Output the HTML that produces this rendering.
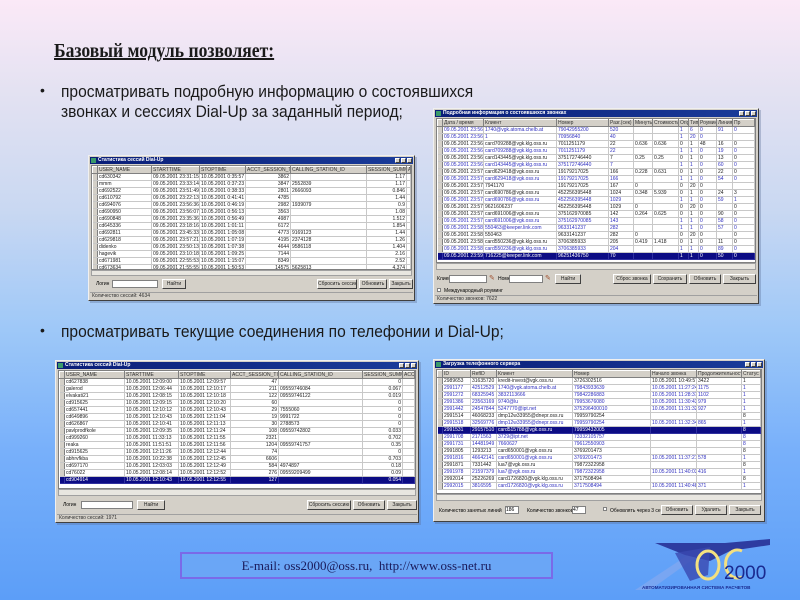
<!DOCTYPE html>
<html><head><meta charset="utf-8"><style>
*{margin:0;padding:0;box-sizing:border-box}
body{width:800px;height:600px;overflow:hidden;position:relative;background:linear-gradient(180deg,#fbe9f7 0%,#e4e2f2 15%,#c9d8f2 35%,#9ec8f8 55%,#78b0fa 75%,#5c9ef8 100%);font-family:"Liberation Sans",sans-serif}
.t{position:absolute;color:#1a1a1a}
.bl{font-size:17px;line-height:20px;white-space:nowrap;transform:scaleX(.915);transform-origin:0 0}
.win{position:absolute;background:#d4d0c8;border:1px solid #f0f0f0;border-right-color:#404040;border-bottom-color:#404040;box-shadow:2px 2px 0 rgba(90,110,150,.35);display:flex;flex-direction:column;padding:1px;font:5px "Liberation Sans",sans-serif;overflow:hidden}
.tb{height:7px;flex:none;background:linear-gradient(90deg,#0a1e78,#1a3c9a);color:#fff;font-weight:bold;line-height:7px;padding-left:8px;position:relative;white-space:nowrap}
.tb:before{content:"";position:absolute;left:1px;top:1px;width:5px;height:5px;background:#3a9a6a}
.tb i{position:absolute;top:1px;width:5px;height:5px;background:#d4d0c8;border:1px solid #fff;border-right-color:#404040;border-bottom-color:#404040}
.grid{flex:1;background:#fff;border:1px solid #808080;overflow:hidden;margin:1px 1px 0}
table{border-collapse:collapse;width:100%;table-layout:fixed}
td,th{border-right:1px solid #c8c8c8;border-bottom:1px solid #c8c8c8;height:7px;line-height:6px;padding:0 1px;white-space:nowrap;overflow:hidden;color:#222;font-weight:normal;text-align:left;font-size:5px}
th{background:#d4d0c8;border:1px solid #fff;border-right-color:#808080;border-bottom-color:#808080;color:#333}
td.i{background:#d4d0c8;border-right:1px solid #808080;width:5px}
tr.s td{background:#0c0c84;color:#fff;border-color:#3030a0}
tr.b td{color:#3030c0}
.r{text-align:right}
.hs{height:6px;flex:none;background:#e8e6e0;margin:0 1px;border:1px solid #a0a0a0}
.pn{flex:none;position:relative;white-space:nowrap}
.bt{position:absolute;height:10px;background:#d4d0c8;border:1px solid #fff;border-right-color:#404040;border-bottom-color:#404040;font-size:5px;line-height:8px;text-align:center;color:#222;white-space:nowrap;overflow:hidden}
.in{position:absolute;height:8px;background:#fff;border:1px solid #808080}
.st{flex:none;height:7px;border-top:1px solid #a0a0a0;line-height:6px;padding-left:2px;color:#333}
</style></head><body>

<div class="t" style="left:54px;top:40px;font:bold 20px 'Liberation Serif',serif;text-decoration:underline;transform:scaleX(.88);transform-origin:0 0;white-space:nowrap">Базовый модуль позволяет:</div>

<div class="t" style="left:40px;top:82px;font-size:14px">•</div>
<div class="t bl" style="left:61px;top:82px">просматривать подробную информацию о состоявшихся<br>звонках и сессиях Dial-Up за заданный период;</div>

<div class="t" style="left:40px;top:322px;font-size:14px">•</div>
<div class="t bl" style="left:61px;top:322px">просматривать текущие соединения по телефонии и Dial-Up;</div>

<!-- top-left window -->
<div class="win" style="left:88px;top:155px;width:327px;height:146px">
<div class="tb">Статистика сессий Dial-Up<i style="right:13px"></i><i style="right:7px"></i><i style="right:1px"></i></div>
<div class="grid"><table>
<tr><th style="width:5px"></th><th style="width:54px">USER_NAME</th><th style="width:48px">STARTTIME</th><th style="width:46px">STOPTIME</th><th style="width:45px">ACCT_SESSION_TIME</th><th style="width:76px">CALLING_STATION_ID</th><th style="width:40px">SESSION_SUMM</th><th>ACC</th></tr>
<tr><td class="i"></td><td>cd630342</td><td>09.05.2001 23:31:15</td><td>10.05.2001 0:35:57</td><td class="r">3862</td><td></td><td class="r">1.17</td><td></td></tr>
<tr><td class="i"></td><td>mmm</td><td>09.05.2001 23:33:14</td><td>10.05.2001 0:37:23</td><td class="r">3847</td><td>2552839</td><td class="r">1.17</td><td></td></tr>
<tr><td class="i"></td><td>cd692522</td><td>09.05.2001 23:51:49</td><td>10.05.2001 0:38:33</td><td class="r">2801</td><td>2666093</td><td class="r">0.846</td><td></td></tr>
<tr><td class="i"></td><td>cd610792</td><td>09.05.2001 23:22:13</td><td>10.05.2001 0:41:41</td><td class="r">4785</td><td></td><td class="r">1.44</td><td></td></tr>
<tr><td class="i"></td><td>cd694076</td><td>09.05.2001 23:56:36</td><td>10.05.2001 0:46:19</td><td class="r">2982</td><td>1939079</td><td class="r">0.9</td><td></td></tr>
<tr><td class="i"></td><td>cd690950</td><td>09.05.2001 23:56:07</td><td>10.05.2001 0:56:13</td><td class="r">3563</td><td></td><td class="r">1.08</td><td></td></tr>
<tr><td class="i"></td><td>cd690848</td><td>09.05.2001 23:35:36</td><td>10.05.2001 0:56:49</td><td class="r">4987</td><td></td><td class="r">1.512</td><td></td></tr>
<tr><td class="i"></td><td>cd645336</td><td>09.05.2001 23:18:16</td><td>10.05.2001 1:01:11</td><td class="r">6172</td><td></td><td class="r">1.854</td><td></td></tr>
<tr><td class="i"></td><td>cd692811</td><td>09.05.2001 23:45:33</td><td>10.05.2001 1:05:08</td><td class="r">4773</td><td>9169123</td><td class="r">1.44</td><td></td></tr>
<tr><td class="i"></td><td>cd629818</td><td>09.05.2001 23:57:21</td><td>10.05.2001 1:07:19</td><td class="r">4195</td><td>2374128</td><td class="r">1.26</td><td></td></tr>
<tr><td class="i"></td><td>didenko</td><td>09.05.2001 23:50:13</td><td>10.05.2001 1:07:38</td><td class="r">4644</td><td>9586118</td><td class="r">1.404</td><td></td></tr>
<tr><td class="i"></td><td>hagevik</td><td>09.05.2001 23:10:18</td><td>10.05.2001 1:09:25</td><td class="r">7144</td><td></td><td class="r">2.16</td><td></td></tr>
<tr><td class="i"></td><td>cd671981</td><td>09.05.2001 22:55:53</td><td>10.05.2001 1:15:07</td><td class="r">8349</td><td></td><td class="r">2.52</td><td></td></tr>
<tr><td class="i"></td><td>cd673634</td><td>09.05.2001 21:55:55</td><td>10.05.2001 1:50:53</td><td class="r">14575</td><td>5625813</td><td class="r">4.374</td><td></td></tr>
<tr class="s"><td class="i"></td><td>mehukov</td><td>09.05.2001 22:10:43</td><td>10.05.2001 2:50:40</td><td class="r">20535</td><td></td><td class="r">0</td><td></td></tr>
</table></div>
<div class="hs"></div>
<div class="pn" style="height:16px"><span style="position:absolute;left:6px;top:5px">Логин</span><div class="in" style="left:22px;top:4px;width:46px"></div><div class="bt" style="left:72px;top:3px;width:24px">Найти</div><div class="bt" style="left:227px;top:3px;width:40px">Сбросить сессию</div><div class="bt" style="left:269px;top:3px;width:28px">Обновить</div><div class="bt" style="left:299px;top:3px;width:24px">Закрыть</div></div>
<div class="st">Количество сессий: 4634</div>
</div>

<!-- top-right window -->
<div class="win" style="left:433px;top:108px;width:326px;height:196px">
<div class="tb">Подробная информация о состоявшихся звонках<i style="right:13px"></i><i style="right:7px"></i><i style="right:1px"></i></div>
<div class="grid"><table>
<tr><th style="width:5px"></th><th style="width:41px">Дата / время</th><th style="width:73px">Клиент</th><th style="width:52px">Номер</th><th style="width:25px">Разг.(сек)</th><th style="width:19px">Минуты</th><th style="width:26px">Стоимость</th><th style="width:10px">Origin</th><th style="width:10px">Тип</th><th style="width:18px">Роуминг</th><th style="width:16px">Линия</th><th>Пр</th></tr>
<tr class="b"><td class="i"></td><td>09.05.2001 23:56:18</td><td>1740@vgk.atoma.chelb.at</td><td>79042955200</td><td>520</td><td></td><td></td><td>1</td><td>6</td><td>0</td><td>91</td><td>0</td></tr>
<tr class="b"><td class="i"></td><td>09.05.2001 23:56:23</td><td>1</td><td>70956840</td><td>40</td><td></td><td></td><td>1</td><td>20</td><td>0</td><td></td><td></td></tr>
<tr><td class="i"></td><td>09.05.2001 23:56:24</td><td>card709288@vgk.klg.oss.ru</td><td>7011251179</td><td>22</td><td>0.636</td><td>0.636</td><td>0</td><td>1</td><td>48</td><td>16</td><td>0</td></tr>
<tr class="b"><td class="i"></td><td>09.05.2001 23:56:24</td><td>card709288@vgk.klg.oss.ru</td><td>7011251179</td><td>22</td><td></td><td></td><td>1</td><td>1</td><td>0</td><td>19</td><td>0</td></tr>
<tr><td class="i"></td><td>09.05.2001 23:56:48</td><td>card143445@vgk.klg.oss.ru</td><td>375172746440</td><td>7</td><td>0.25</td><td>0.25</td><td>0</td><td>1</td><td>0</td><td>13</td><td>0</td></tr>
<tr class="b"><td class="i"></td><td>09.05.2001 23:56:48</td><td>card143445@vgk.klg.oss.ru</td><td>375172746440</td><td>7</td><td></td><td></td><td>1</td><td>1</td><td>0</td><td>60</td><td>0</td></tr>
<tr><td class="i"></td><td>09.05.2001 23:57:02</td><td>card629418@vgk.oss.ru</td><td>19179217025</td><td>166</td><td>0.228</td><td>0.631</td><td>0</td><td>1</td><td>0</td><td>22</td><td>0</td></tr>
<tr class="b"><td class="i"></td><td>09.05.2001 23:57:02</td><td>card629418@vgk.oss.ru</td><td>19179217025</td><td>166</td><td></td><td></td><td>1</td><td>1</td><td>0</td><td>54</td><td>0</td></tr>
<tr><td class="i"></td><td>09.05.2001 23:57:02</td><td>7941170</td><td>19179217025</td><td>167</td><td>0</td><td></td><td>0</td><td>20</td><td>0</td><td></td><td></td></tr>
<tr><td class="i"></td><td>09.05.2001 23:57:19</td><td>card690786@vgk.oss.ru</td><td>452256395448</td><td>1024</td><td>0.348</td><td>5.939</td><td>0</td><td>1</td><td>0</td><td>24</td><td>3</td></tr>
<tr class="b"><td class="i"></td><td>09.05.2001 23:57:19</td><td>card690786@vgk.oss.ru</td><td>452256395448</td><td>1029</td><td></td><td></td><td>1</td><td>1</td><td>0</td><td>59</td><td>1</td></tr>
<tr><td class="i"></td><td>09.05.2001 23:57:19</td><td>9621606237</td><td>452256395448</td><td>1029</td><td>0</td><td></td><td>0</td><td>20</td><td>0</td><td></td><td>0</td></tr>
<tr><td class="i"></td><td>09.05.2001 23:57:43</td><td>card691006@vgk.oss.ru</td><td>375162970085</td><td>142</td><td>0.264</td><td>0.625</td><td>0</td><td>1</td><td>0</td><td>90</td><td>0</td></tr>
<tr class="b"><td class="i"></td><td>09.05.2001 23:57:43</td><td>card691006@vgk.oss.ru</td><td>375162970085</td><td>143</td><td></td><td></td><td>1</td><td>1</td><td>0</td><td>58</td><td>0</td></tr>
<tr class="b"><td class="i"></td><td>09.05.2001 23:58:44</td><td>550463@keeper.link.com</td><td>9633141237</td><td>282</td><td></td><td></td><td>1</td><td>1</td><td>0</td><td>57</td><td>0</td></tr>
<tr><td class="i"></td><td>09.05.2001 23:58:44</td><td>550463</td><td>9633141237</td><td>282</td><td>0</td><td></td><td>0</td><td>20</td><td>0</td><td></td><td>0</td></tr>
<tr><td class="i"></td><td>09.05.2001 23:58:52</td><td>card550236@vgk.klg.oss.ru</td><td>3706385933</td><td>205</td><td>0.419</td><td>1.418</td><td>0</td><td>1</td><td>0</td><td>11</td><td>0</td></tr>
<tr class="b"><td class="i"></td><td>09.05.2001 23:58:52</td><td>card550236@vgk.klg.oss.ru</td><td>3706385933</td><td>204</td><td></td><td></td><td>1</td><td>1</td><td>0</td><td>89</td><td>0</td></tr>
<tr class="s"><td class="i"></td><td>09.05.2001 23:59:26</td><td>716225@keeper.link.com</td><td>96251436750</td><td>70</td><td></td><td></td><td>1</td><td>1</td><td>0</td><td>50</td><td>0</td></tr>
</table></div>
<div class="hs" style="height:7px"></div>
<div class="pn" style="height:18px"><span style="position:absolute;left:2px;top:6px">Клиент</span><div class="in" style="left:14px;top:5px;width:38px"></div><span style="position:absolute;left:54px;top:4px;color:#a05030;font-size:7px">✎</span><span style="position:absolute;left:63px;top:6px">Номер</span><div class="in" style="left:74px;top:5px;width:34px"></div><span style="position:absolute;left:110px;top:4px;color:#a05030;font-size:7px">✎</span><div class="bt" style="left:120px;top:4px;width:26px">Найти</div><div class="bt" style="left:178px;top:4px;width:38px">Сброс звонка</div><div class="bt" style="left:218px;top:4px;width:34px">Сохранить</div><div class="bt" style="left:254px;top:4px;width:32px">Обновить</div><div class="bt" style="left:288px;top:4px;width:33px">Закрыть</div></div>
<div class="pn" style="height:7px"><span style="position:absolute;left:2px;top:0;width:4px;height:4px;background:#fff;border:1px solid #808080"></span><span style="position:absolute;left:9px;top:0">Международный роуминг</span></div>
<div class="st">Количество звонков: 7622</div>
</div>

<!-- bottom-left window -->
<div class="win" style="left:55px;top:360px;width:364px;height:163px">
<div class="tb">Статистика сессий Dial-Up<i style="right:13px"></i><i style="right:7px"></i><i style="right:1px"></i></div>
<div class="grid"><table>
<tr><th style="width:5px"></th><th style="width:60px">USER_NAME</th><th style="width:54px">STARTTIME</th><th style="width:52px">STOPTIME</th><th style="width:48px">ACCT_SESSION_TIME</th><th style="width:84px">CALLING_STATION_ID</th><th style="width:40px">SESSION_SUMM</th><th>ACC</th></tr>
<tr><td class="i"></td><td>cd627838</td><td>10.05.2001 12:09:00</td><td>10.05.2001 12:09:57</td><td class="r">47</td><td></td><td class="r">0</td><td></td></tr>
<tr><td class="i"></td><td>galerod</td><td>10.05.2001 12:06:44</td><td>10.05.2001 12:10:17</td><td class="r">211</td><td>09559746084</td><td class="r">0.067</td><td></td></tr>
<tr><td class="i"></td><td>elvakati21</td><td>10.05.2001 12:08:15</td><td>10.05.2001 12:10:18</td><td class="r">122</td><td>09559746122</td><td class="r">0.019</td><td></td></tr>
<tr><td class="i"></td><td>cd915625</td><td>10.05.2001 12:09:15</td><td>10.05.2001 12:10:20</td><td class="r">60</td><td></td><td class="r">0</td><td></td></tr>
<tr><td class="i"></td><td>cd657441</td><td>10.05.2001 12:10:12</td><td>10.05.2001 12:10:43</td><td class="r">29</td><td>7555060</td><td class="r">0</td><td></td></tr>
<tr><td class="i"></td><td>cd649896</td><td>10.05.2001 12:10:43</td><td>10.05.2001 12:11:04</td><td class="r">19</td><td>9991722</td><td class="r">0</td><td></td></tr>
<tr><td class="i"></td><td>cd626867</td><td>10.05.2001 12:10:41</td><td>10.05.2001 12:11:13</td><td class="r">30</td><td>2788573</td><td class="r">0</td><td></td></tr>
<tr><td class="i"></td><td>pavlprodfkole</td><td>10.05.2001 12:09:35</td><td>10.05.2001 12:11:24</td><td class="r">108</td><td>09559742802</td><td class="r">0.033</td><td></td></tr>
<tr><td class="i"></td><td>cd999260</td><td>10.05.2001 11:33:13</td><td>10.05.2001 12:11:55</td><td class="r">2321</td><td></td><td class="r">0.702</td><td></td></tr>
<tr><td class="i"></td><td>reaka</td><td>10.05.2001 11:51:51</td><td>10.05.2001 12:11:56</td><td class="r">1204</td><td>09559741757</td><td class="r">0.35</td><td></td></tr>
<tr><td class="i"></td><td>cd915625</td><td>10.05.2001 12:11:26</td><td>10.05.2001 12:12:44</td><td class="r">74</td><td></td><td class="r">0</td><td></td></tr>
<tr><td class="i"></td><td>abhrvfkba</td><td>10.05.2001 10:22:38</td><td>10.05.2001 12:12:45</td><td class="r">6606</td><td></td><td class="r">0.703</td><td></td></tr>
<tr><td class="i"></td><td>cd697170</td><td>10.05.2001 12:03:03</td><td>10.05.2001 12:12:49</td><td class="r">584</td><td>4974897</td><td class="r">0.18</td><td></td></tr>
<tr><td class="i"></td><td>cd76022</td><td>10.05.2001 12:08:14</td><td>10.05.2001 12:12:52</td><td class="r">276</td><td>09559209499</td><td class="r">0.09</td><td></td></tr>
<tr class="s"><td class="i"></td><td>cd904914</td><td>10.05.2001 12:10:43</td><td>10.05.2001 12:12:55</td><td class="r">127</td><td></td><td class="r">0.054</td><td></td></tr>
</table></div>
<div class="hs" style="height:7px"></div>
<div class="pn" style="height:18px"><span style="position:absolute;left:6px;top:6px">Логин</span><div class="in" style="left:24px;top:5px;width:52px"></div><div class="bt" style="left:80px;top:4px;width:28px">Найти</div><div class="bt" style="left:250px;top:4px;width:44px">Сбросить сессию</div><div class="bt" style="left:296px;top:4px;width:32px">Обновить</div><div class="bt" style="left:330px;top:4px;width:30px">Закрыть</div></div>
<div class="st">Количество сессий: 1971</div>
</div>

<!-- bottom-right window -->
<div class="win" style="left:433px;top:359px;width:332px;height:163px">
<div class="tb">Загрузка телефонного сервера<i style="right:13px"></i><i style="right:7px"></i><i style="right:1px"></i></div>
<div class="grid"><table>
<tr><th style="width:5px"></th><th style="width:28px">ID</th><th style="width:26px">RefID</th><th style="width:76px">Клиент</th><th style="width:78px">Номер</th><th style="width:46px">Начало звонка</th><th style="width:45px">Продолжительность</th><th>Статус</th></tr>
<tr><td class="i"></td><td>2989653</td><td>31635720</td><td>kredit-invest@vgk.oss.ru</td><td>3726302516</td><td>10.05.2001 10:49:57</td><td>3422</td><td>1</td></tr>
<tr class="b"><td class="i"></td><td>2991177</td><td>42512529</td><td>1740@vgk.atoma.chelb.at</td><td>79843933639</td><td>10.05.2001 11:27:24</td><td>1175</td><td>1</td></tr>
<tr class="b"><td class="i"></td><td>2991272</td><td>68325945</td><td>3832113666</td><td>79842286883</td><td>10.05.2001 11:28:37</td><td>1102</td><td>1</td></tr>
<tr class="b"><td class="i"></td><td>2991386</td><td>23563169</td><td>9740@lu</td><td>79953676080</td><td>10.05.2001 11:30:43</td><td>979</td><td>1</td></tr>
<tr class="b"><td class="i"></td><td>2991442</td><td>24547844</td><td>5247770@ipt.net</td><td>375296400010</td><td>10.05.2001 11:31:32</td><td>927</td><td>1</td></tr>
<tr><td class="i"></td><td>2991514</td><td>46068233</td><td>dmp12w33955@dnepr.oss.ru</td><td>79959790254</td><td></td><td></td><td>8</td></tr>
<tr class="b"><td class="i"></td><td>2991518</td><td>32569776</td><td>dmp12w33955@dnepr.oss.ru</td><td>79959790254</td><td>10.05.2001 11:32:34</td><td>865</td><td>1</td></tr>
<tr class="s"><td class="i"></td><td>2991531</td><td>29157510</td><td>card515788@vgk.oss.ru</td><td>79959432005</td><td></td><td></td><td>8</td></tr>
<tr class="b"><td class="i"></td><td>2991708</td><td>2171563</td><td>3729@ipt.net</td><td>73332105757</td><td></td><td></td><td>8</td></tr>
<tr class="b"><td class="i"></td><td>2991731</td><td>14481949</td><td>7660627</td><td>79612550903</td><td></td><td></td><td>8</td></tr>
<tr><td class="i"></td><td>2991805</td><td>1293213</td><td>card650001@vgk.oss.ru</td><td>3769201473</td><td></td><td></td><td>8</td></tr>
<tr class="b"><td class="i"></td><td>2991816</td><td>46642141</td><td>card650001@vgk.oss.ru</td><td>3769201473</td><td>10.05.2001 11:37:21</td><td>578</td><td>1</td></tr>
<tr><td class="i"></td><td>2991871</td><td>7331442</td><td>lua7@vgk.oss.ru</td><td>79872322958</td><td></td><td></td><td>8</td></tr>
<tr class="b"><td class="i"></td><td>2991978</td><td>21597379</td><td>lua7@vgk.oss.ru</td><td>79872322958</td><td>10.05.2001 11:40:03</td><td>416</td><td>1</td></tr>
<tr><td class="i"></td><td>2992014</td><td>25226269</td><td>card1726820@vgk.klg.oss.ru</td><td>3717508494</td><td></td><td></td><td>8</td></tr>
<tr class="b"><td class="i"></td><td>2992015</td><td>3816595</td><td>card1726820@vgk.klg.oss.ru</td><td>3717508494</td><td>10.05.2001 11:40:48</td><td>371</td><td>1</td></tr>
</table></div>
<div class="hs" style="height:7px"></div>
<div class="pn" style="height:19px"><span style="position:absolute;left:4px;top:7px">Количество занятых линий</span><div class="in" style="left:70px;top:5px;width:14px;font-size:5px;line-height:6px">186</div><span style="position:absolute;left:92px;top:7px">Количество звонков</span><div class="in" style="left:137px;top:5px;width:14px;font-size:5px;line-height:6px">47</div><span style="position:absolute;left:168px;top:6px;width:4px;height:4px;background:#fff;border:1px solid #808080"></span><span style="position:absolute;left:175px;top:7px">Обновлять через 3 сек.</span><div class="bt" style="left:226px;top:4px;width:32px">Обновить</div><div class="bt" style="left:260px;top:4px;width:32px">Удалить</div><div class="bt" style="left:294px;top:4px;width:32px">Закрыть</div></div>
</div>

<!-- footer -->
<div style="position:absolute;left:180px;top:552px;width:373px;height:27px;border:2px solid #7a6ae8;background:#6aa6f6;color:#1a1a5a;font:13px 'Liberation Serif',serif;text-align:center;line-height:23px">E-mail: oss2000@oss.ru,&nbsp; http://www.oss-net.ru</div>

<!-- logo -->
<svg style="position:absolute;left:630px;top:535px" width="170" height="65" viewBox="0 0 170 65">
<path d="M5 55 L70 12 L80 12 L20 55 Z" fill="#7fa8f0" opacity=".8"/>
<path d="M25 8 L95 8 L140 4 L140 10 L100 16 L80 26 L55 20 Z" fill="#2e3ca0"/>
<path d="M45 18 L80 12 L78 40 L60 46 Z" fill="#3a48b0" opacity=".8"/>
<ellipse cx="78" cy="30" rx="11" ry="14" fill="none" stroke="#f4e080" stroke-width="3"/>
<path d="M112 16 A12 14 0 1 0 112 42" fill="none" stroke="#f4e080" stroke-width="3"/>
<text x="94" y="44" font-family="Liberation Sans,sans-serif" font-size="19" fill="#1a2a90">2000</text>
<text x="12" y="54" font-family="Liberation Sans,sans-serif" font-size="4.6" font-weight="bold" fill="#1a2a90">АВТОМАТИЗИРОВАННАЯ СИСТЕМА РАСЧЕТОВ</text>
</svg>
</body></html>
